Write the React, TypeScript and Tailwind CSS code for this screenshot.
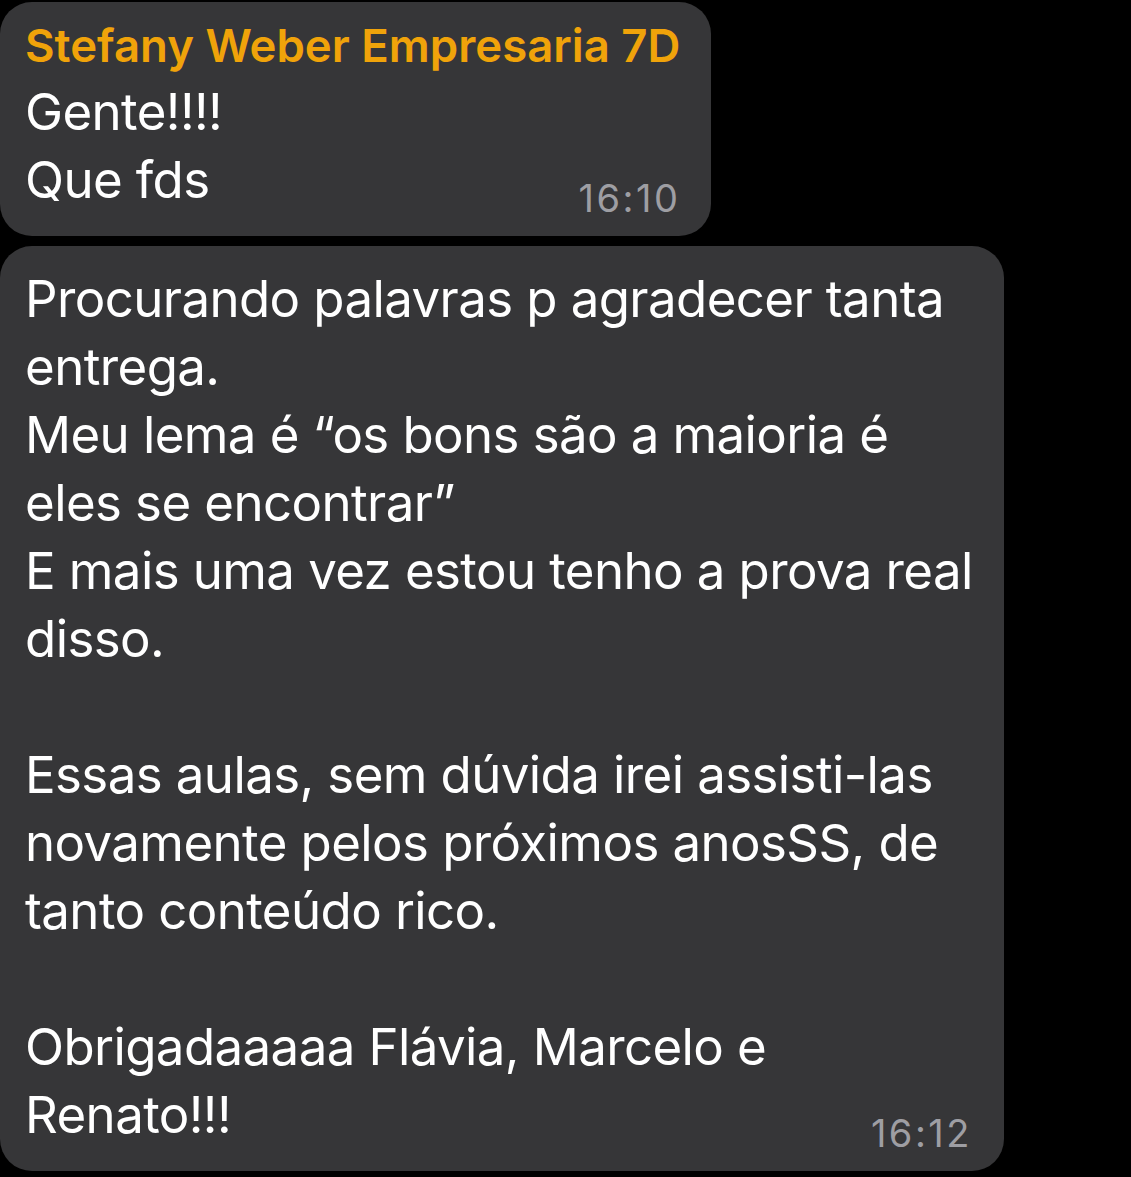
import React from 'react';

const font = "font-['Inter','Noto_Sans',sans-serif]";

const Bubble = ({
  width,
  className,
  children,
}: {
  width?: string;
  className?: string;
  children: React.ReactNode;
}) => (
  <div className={`bg-[#363638] rounded-[32px] ${width ?? 'w-fit'} ${className ?? ''}`}>
    {children}
  </div>
);

const Line = ({ text }: { text: string }) => (
  <div className="h-[68px] leading-[68px] whitespace-pre">{text || '\u00a0'}</div>
);

const Time = ({ value }: { value: string }) => (
  <span className="text-[#9e9ea3] text-[38px] tracking-[2.5px] leading-[44px] mb-[-6px]">{value}</span>
);

const App = () => {
  const lines = [
    'Procurando palavras p agradecer tanta',
    'entrega.',
    'Meu lema é “os bons são a maioria é',
    'eles se encontrar”',
    'E mais uma vez estou tenho a prova real',
    'disso.',
    '',
    'Essas aulas, sem dúvida irei assisti-las',
    'novamente pelos próximos anosSS, de',
    'tanto conteúdo rico.',
    '',
    'Obrigadaaaaa Flávia, Marcelo e',
  ];

  return (
    <div className={`min-h-[1177px] w-[1131px] bg-black text-white ${font} pt-[2px] overflow-hidden`}>
      <Bubble className="pl-[25px] pr-[31px] pt-[12px] pb-[22px]">
        <div className="text-[#f0a30a] text-[45.5px] font-semibold leading-[64px] whitespace-nowrap">
          Stefany Weber Empresaria 7D
        </div>
        <div className="text-[51px] tracking-[-0.6px]">
          <Line text="Gente!!!!" />
          <div className="flex items-end justify-between">
            <Line text="Que fds" />
            <Time value="16:10" />
          </div>
        </div>
      </Bubble>

      <Bubble width="w-[1004px]" className="mt-[10px] pl-[25px] pr-[32px] pt-[19px] pb-[22px]">
        <div className="text-[51px] tracking-[-0.6px]">
          {lines.map((l, i) => (
            <Line key={i} text={l} />
          ))}
          <div className="flex items-end justify-between">
            <Line text="Renato!!!" />
            <Time value="16:12" />
          </div>
        </div>
      </Bubble>
    </div>
  );
};

export default App;
